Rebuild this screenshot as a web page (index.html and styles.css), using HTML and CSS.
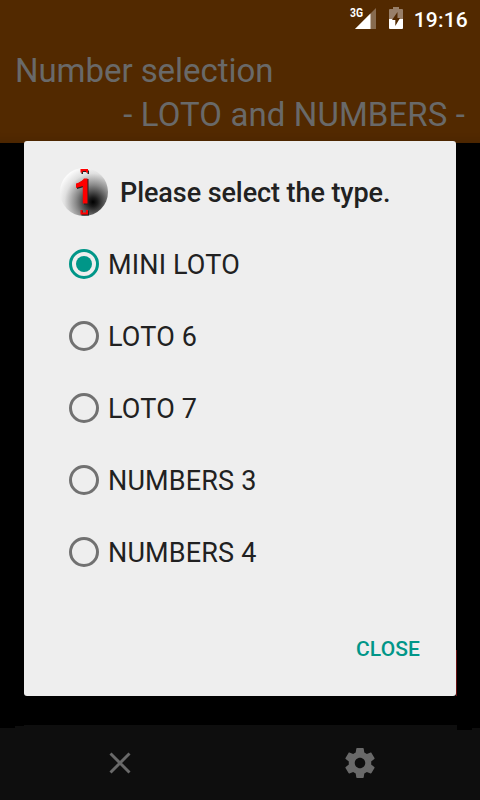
FILE: index.html
```
<!DOCTYPE html>
<html lang="en">
<head>
<meta charset="utf-8">
<title>Number selection</title>
<link rel="stylesheet" href="styles.css">
</head>
<body>
<div class="screen">
  <header class="header">
    <div class="status">
      <svg class="signal" width="28" height="24" viewBox="0 0 28 24">
        <path d="M26 1V22H5Z" fill="#876b4f"/>
        <path d="M20.500 6.500V22H5Z" fill="#fff"/>
        <text class="network" x="0" y="10" textLength="13" lengthAdjust="spacingAndGlyphs">3G</text>
      </svg>
      <svg class="battery" width="14" height="22" viewBox="0 0 14 22">
        <path d="M4 0H10V2H13Q14 2 14 3V12H0V3Q0 2 1 2H4Z" fill="#987f69"/>
        <path d="M0 12H14V21Q14 22 13 22H1Q0 22 0 21Z" fill="#fff"/>
        <path d="M8.500 5L3 13H6.300V19L11 11H8.500Z" fill="#522900"/>
      </svg>
      <span class="clock">19:16</span>
    </div>
    <h1 class="title"><span class="line">Number selection</span><span class="subtitle">- LOTO and NUMBERS -</span></h1>
  </header>
  <main class="content"></main>
  <footer class="toolbar">
    <svg class="edge" width="480" height="5" viewBox="0 0 480 5" shape-rendering="crispEdges">
      <path d="M0 0H24V1H15V3H0ZM457 0H480V3H472V5H457Z" fill="#000"/>
    </svg>
    <svg class="tool" width="36" height="36" viewBox="0 0 36 36"><path d="M8.500 8.500L27.500 27.500M27.500 8.500L8.500 27.500" stroke="#696969" stroke-width="2.900" fill="none"/></svg>
    <svg class="tool" width="36" height="36" viewBox="0 0 24 24"><path fill="#696969" d="M19.430 12.980c.04-.32.070-.64.070-.98s-.03-.66-.07-.98l2.110-1.650c.19-.15.240-.42.120-.64l-2-3.460c-.12-.22-.39-.3-.61-.22l-2.490 1c-.52-.4-1.080-.73-1.690-.98l-.38-2.650C14.460 2.180 14.250 2 14 2h-4c-.25 0-.46.180-.49.420l-.38 2.650c-.61.250-1.170.590-1.690.980l-2.490-1c-.23-.09-.49 0-.61.220l-2 3.460c-.13.220-.07.490.120.640l2.110 1.650c-.04.320-.07.650-.07.980s.03.660.070.980l-2.110 1.650c-.19.150-.24.420-.12.640l2 3.460c.12.220.39.300.61.220l2.490-1c.52.400 1.080.730 1.690.980l.38 2.650c.03.240.24.420.49.420h4c.25 0 .46-.18.49-.42l.38-2.650c.61-.25 1.170-.59 1.690-.98l2.490 1c.23.090.49 0 .61-.22l2-3.460c.12-.22.070-.49-.12-.64l-2.110-1.650zM12 15.500c-1.930 0-3.500-1.570-3.500-3.500s1.570-3.500 3.500-3.500 3.500 1.570 3.500 3.500-1.570 3.500-3.500 3.500z"/></svg>
  </footer>
  <section class="dialog">
    <div class="dialog-head">
      <svg class="ball" width="48" height="48" viewBox="0 0 48 48">
        <defs>
          <radialGradient id="shade" gradientUnits="userSpaceOnUse" cx="33" cy="34" r="38">
            <stop offset="0" stop-color="#000"/><stop offset=".12" stop-color="#1c1c1c"/><stop offset=".45" stop-color="#8a8a8a"/><stop offset=".75" stop-color="#e0e0e0"/><stop offset="1" stop-color="#fff"/>
          </radialGradient>
        </defs>
        <circle cx="24" cy="24" r="24" fill="url(#shade)"/>
        <path d="M21.500 2.500H29V6H27.500V4H23V6H21.500ZM21.500 42.500H23V46H27.500V42.500H29V47.500H21.500Z" fill="#222"/>
        <path d="M20.500 1H28V4.500H26V3H22.500V4.500H20.500ZM20.500 42H22.500V44.500H26V42H28V46.500H20.500Z" fill="#f00"/>
        <path d="M17 16L25 11H28.500V36.500H24V19L17 21Z" fill="#222"/>
        <path d="M16 15.500Q21.500 14 24 10.500H27.500V35.500H22.800V18L16 20Z" fill="#f00"/>
      </svg>
      <h2 class="dialog-title">Please select the type.</h2>
    </div>
    <ul class="options">
      <li class="option"><span class="radio checked"></span><span class="label">MINI LOTO</span></li>
      <li class="option"><span class="radio"></span><span class="label">LOTO 6</span></li>
      <li class="option"><span class="radio"></span><span class="label">LOTO 7</span></li>
      <li class="option"><span class="radio"></span><span class="label">NUMBERS 3</span></li>
      <li class="option"><span class="radio"></span><span class="label">NUMBERS 4</span></li>
    </ul>
    <div class="actions"><button class="close">CLOSE</button></div>
  </section>
</div>
</body>
</html>
```

FILE: styles.css
```
* { box-sizing: border-box; }
body { margin: 0; background: #000; font-family: Roboto, "Liberation Sans", sans-serif; }
.screen { position: relative; width: 480px; height: 800px; display: flex; flex-direction: column; overflow: hidden; background: #000; }
.header { height: 143px; background: #522900; box-shadow: inset 0 -12px 10px -10px rgba(0, 0, 0, .12); }
.status { height: 38px; display: flex; justify-content: flex-end; align-items: flex-start; padding: 7px 12px 0 0; color: #fff; }
.signal { margin-right: 11px; overflow: visible; }
.network { font-size: 12px; font-weight: 700; fill: #fff; }
.battery { margin-right: 11px; }
.clock { font-size: 21px; font-weight: 500; line-height: 26px; letter-spacing: .2px; }
.title { margin: 0; padding: 11px 15px 0; display: flex; flex-direction: column; font-size: 33px; font-weight: 400; line-height: 44px; color: #696969; }
.line { letter-spacing: -.06px; }
.subtitle { text-align: right; letter-spacing: .1px; }
.content { flex: 1; }
.toolbar { position: relative; height: 75px; display: flex; justify-content: space-around; align-items: center; background: #0e0e0e; }
.edge { position: absolute; top: 0; left: 0; }
.dialog { position: absolute; left: 24px; top: 141px; width: 432px; height: 555px; display: flex; flex-direction: column; background: #eee; border-radius: 3px; color: #212121; }
.dialog::after { content: ""; position: absolute; left: 432px; top: 509px; width: 1px; height: 46px; background: #661010; }
.dialog-head { flex: none; display: flex; align-items: flex-start; gap: 12px; height: 87px; padding: 27px 36px 0; }
.dialog-title { margin: 0; padding-top: 7px; font-size: 27px; font-weight: 500; line-height: 36px; letter-spacing: -.08px; }
.options { flex: none; margin: 0; padding: 0 45px; list-style: none; }
.option { height: 72px; display: flex; align-items: center; gap: 9px; font-size: 27px; letter-spacing: .16px; }
.radio { width: 30px; height: 30px; display: grid; place-items: center; border: 3px solid #717171; border-radius: 50%; }
.label { padding-top: 2px; }
.checked { border-color: #009688; }
.checked::after { content: ""; width: 16px; height: 16px; border-radius: 50%; background: #009688; }
.actions { flex: 1; display: flex; justify-content: flex-end; padding: 25px 36px 0; }
.close { height: 54px; margin-top: 9px; padding: 0; border: 0; background: none; font: 500 21px Roboto, sans-serif; letter-spacing: .1px; color: #009688; }
```
